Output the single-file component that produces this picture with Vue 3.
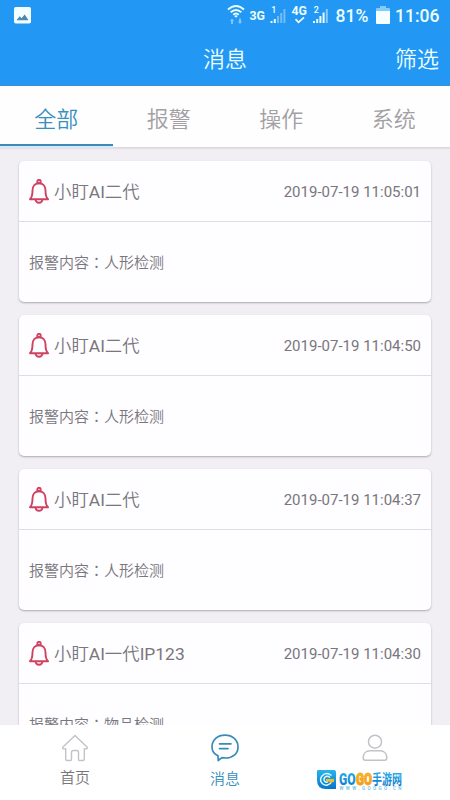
<script setup>
const tabs = ['全部', '报警', '操作', '系统']
const alerts = [
  { name: '小盯AI二代', time: '2019-07-19 11:05:01', content: '人形检测' },
  { name: '小盯AI二代', time: '2019-07-19 11:04:50', content: '人形检测' },
  { name: '小盯AI二代', time: '2019-07-19 11:04:37', content: '人形检测' },
  { name: '小盯AI一代IP123', time: '2019-07-19 11:04:30', content: '物品检测' }
]
</script>

<template>
  <div class="screen">
    <header class="top">
      <div class="status">
        <svg class="photo" width="17" height="17" viewBox="0 0 17 17">
          <rect width="17" height="16.500" rx="1.8" fill="#f4fdff" />
          <path d="M2.5 13.2 5.7 9.2 7.6 11.3 10.7 7.5 14.5 13.2Z" fill="#4b87ae" />
        </svg>
        <svg class="signals" width="106" height="28" viewBox="0 0 106 28" fill="#eaffff">
          <g fill="none" stroke="#eaffff" stroke-width="1.9">
            <path d="M1 9.5Q9 2.3 17 9.5" />
            <path d="M3.7 12.3Q9 7.5 14.3 12.3" />
            <path d="M6.3 14.7Q9 12.2 11.7 14.7" />
          </g>
          <path d="M7.2 16Q9 14.3 10.8 16L9 17.8Z" />
          <path d="M5 18.5 7.200 21H6v3H4v-3H2.800ZM13 24l2.200-2.500H14v-3h-2v3h-1.200Z" fill="#7fc5fa" />
          <text x="22.5" y="19.7" class="net" textLength="15.5" lengthAdjust="spacingAndGlyphs">3G</text>
          <text x="44.3" y="13" class="sim">1</text>
          <path d="M43.5 21h2v2h-2zM46.8 19h2v4h-2z" />
          <path d="M50 16h2v7h-2zM53.2 13h2v10h-2zM56.4 9h2v14h-2z" fill="#76bcf4" />
          <text x="64.5" y="15" class="net four" textLength="15.5" lengthAdjust="spacingAndGlyphs">4G</text>
          <path d="m68.5 19.200 3 3.2 5.5-5" fill="none" stroke="#eaffff" stroke-width="1.7" />
          <text x="86.8" y="13" class="sim">2</text>
          <path d="M86 21h2v2h-2zM89.2 19h2v4h-2zM92.4 16h2v7h-2zM95.6 12.5h2V23h-2z" />
          <path d="M98.8 9h2v14h-2z" fill="#8bcaf8" />
        </svg>
        <span class="percent">81%</span>
        <svg class="battery" width="14" height="18" viewBox="0 0 14 18">
          <path d="M4 0h6v2h3q1 0 1 1v3H0V3q0-1 1-1h3Z" fill="#83cbf8" />
          <path d="M0 5h14v12q0 1-1 1H1q-1 0-1-1Z" fill="#f6ffff" />
        </svg>
        <span class="clock">11:06</span>
      </div>
      <div class="titlebar">
        <span></span><h1>消息</h1><button>筛选</button>
      </div>
    </header>

    <nav class="tabs">
      <button v-for="(tab, i) in tabs" :key="tab" :class="{ active: i === 0 }">{{ tab }}</button>
    </nav>

    <main class="list">
      <article v-for="item in alerts" :key="item.time" class="card">
        <div class="card-head">
          <svg class="bell" width="20" height="25" viewBox="0 0 20 25" fill="none" stroke="#d0425f" stroke-width="1.900" stroke-linejoin="round">
            <circle cx="10" cy="2.5" r="1.7" />
            <path d="M1 20.3C3 18.4 3.5 16 3.5 11.5 3.5 7 6.2 4.2 10 4.2S16.500 7 16.500 11.5C16.500 16 17 18.4 19 20.300Z" />
            <path d="M6.500 20.500C7 24.900 13 24.900 13.500 20.500" />
          </svg>
          <span class="name">{{ item.name }}</span>
          <time>{{ item.time }}</time>
        </div>
        <div class="card-body"><span>报警内容<span class="colon">：</span>{{ item.content }}</span></div>
      </article>
    </main>

    <footer class="bottom">
      <div class="nav-item">
        <svg width="28" height="28" viewBox="0 0 28 28" fill="none" stroke="#c4c1c7" stroke-width="1.4" stroke-linejoin="round">
          <path d="M14 1.500 1.700 13.200Q1 15.300 4.700 14.800V25Q4.700 26.500 6.200 26.500H9.500Q10.500 26.500 10.500 25V18.500Q10.500 16.500 12.300 16.500H15.700Q17.500 16.500 17.500 18.500V25Q17.500 26.500 18.500 26.500H21.800Q23.300 26.500 23.300 25V14.800Q27 15.300 26.300 13.200Z" />
        </svg>
        <span>首页</span>
      </div>
      <div class="nav-item current">
        <svg width="28" height="28" viewBox="0 0 28 28" fill="none" stroke="#398bb9" stroke-width="1.700" stroke-linejoin="round" stroke-linecap="round">
          <path d="M7 21.800C3.300 20 1 17 1 13 1 6 6.500 1.200 14 1.200S27 6 27 13 21.500 24 14.500 24Q12.500 24 11 23.600L7.200 26.500Z" />
          <path d="M8.500 9.800H20M8.500 14.600H17" />
        </svg>
        <span>消息</span>
      </div>
      <div class="nav-item mine">
        <svg width="28" height="28" viewBox="0 0 28 28" fill="none" stroke="#c4c1c7" stroke-width="1.500" stroke-linejoin="round">
          <circle cx="14" cy="7.700" r="6.500" />
          <path d="M2.200 24C2.200 19 5.500 16.800 9 16.800H19C22.500 16.800 25.800 19 25.800 24Q25.800 26.200 23.800 26.200H4.200Q2.200 26.200 2.200 24Z" />
        </svg>
        <svg class="watermark" width="88" height="22" viewBox="0 0 88 22">
          <defs>
            <linearGradient id="blue" x1="0" y1="0" x2="0" y2="1"><stop stop-color="#28b4ed" /><stop offset="1" stop-color="#0874ca" /></linearGradient>
            <linearGradient id="gold" x1="0" y1="0" x2="0" y2="1"><stop stop-color="#ffca20" /><stop offset="1" stop-color="#f28c16" /></linearGradient>
          </defs>
          <path d="M2 1H18Q20 1 20 3V20H10Q1 20 1 11V2Q1 1 2 1Z" fill="url(#blue)" />
          <path d="M15.500 6.500Q10 2.300 5.800 7.200C2.500 12 7 17.200 11.500 16Q14.500 15.200 15.700 12.500M14 8.500Q10.500 5.800 8.200 9.200C7 12 10 14.300 12 12.500" fill="none" stroke="#dff7ff" stroke-width="1.500" />
          <path d="M10 10h8v3h-2l-1 1.500-2-2h-3Z" fill="#f2bd28" />
          <g class="brand">
            <text x="23" y="15.500" fill="url(#blue)" textLength="16.500" lengthAdjust="spacingAndGlyphs">GO</text>
            <text x="40" y="15.500" class="gold" fill="url(#gold)" textLength="16" lengthAdjust="spacingAndGlyphs">GO</text>
            <text x="56" y="14.500" class="cn" fill="url(#blue)" textLength="30" lengthAdjust="spacingAndGlyphs">手游网</text>
          </g>
          <text x="23.500" y="20.800" class="url" textLength="62">WWW.GOOGO.CN</text>
        </svg>
      </div>
    </footer>
  </div>
</template>

<style>
body { margin: 0; }
</style>

<style scoped>
.screen { width: 450px; height: 800px; overflow: hidden; display: flex; flex-direction: column; background: #f1eff3; font-family: Roboto, "Noto Sans CJK SC DemiLight", "Noto Sans CJK SC", sans-serif; font-weight: 350; color: #79767c; }
button { border: 0; background: none; padding: 0; font: inherit; color: inherit; }
.top { height: 86px; background: #2397f4; color: #edffff; flex: none; box-sizing: border-box; border-bottom: 1px solid #3d8fd2; }
.status { height: 32px; display: flex; align-items: center; font-weight: 400; }
.photo { margin: -2px 0 0 14px; }
.signals { margin: -4px 0 0 196px; }
.net { font: 700 13.500px Roboto, sans-serif; }
.four { font-size: 13px; }
.sim { font: 500 9px Roboto, sans-serif; }
.percent { width: 39px; margin-left: 2.500px; font-size: 17.500px; line-height: 32px; font-weight: 500; }
.battery { margin-left: 1.500px; margin-top: -2px; }
.clock { margin-left: 5px; font-size: 17.500px; line-height: 32px; font-weight: 500; }
.titlebar { height: 53px; display: grid; grid-template-columns: 1fr auto 1fr; align-items: center; font-size: 22px; padding-bottom: 1px; box-sizing: border-box; }
.titlebar h1 { margin: -2px 0 0; font: inherit; }
.titlebar button { justify-self: end; margin: -2px 11px 0 0; }
.tabs { height: 62px; flex: none; box-sizing: border-box; display: grid; grid-template-columns: repeat(4, 1fr); background: #fefeff; box-shadow: inset 0 -1px #dbd9dd, 0 1px 1px #e2e0e5; color: #a3a0a4; font-size: 22px; }
.tabs button { padding-top: 1px; border-bottom: 2px solid transparent; }
.tabs .active { color: #398fbe; border-color: #4187ba; box-shadow: 0 2px #d0eafa; margin-bottom: 2px; padding-top: 3px; }
.list { flex: 1; min-height: 0; overflow: hidden; display: flex; flex-direction: column; gap: 13px; padding: 13px 19px 0; }
.card { height: 141px; flex: none; background: #fefdff; border-radius: 5px; box-shadow: 0 1px 2px #aaa8ad; }
.card-head { height: 61px; box-sizing: border-box; border-bottom: 1px solid #dedde1; display: flex; align-items: center; padding: 0 10px; }
.bell { flex: none; }
.name { font-size: 17.400px; margin: -2px 0 0 5px; font-weight: 400; }
time { margin: 1px 0 0 auto; font-size: 15px; font-weight: 400; white-space: nowrap; }
.card-body { height: 79px; display: flex; align-items: center; padding: 0 10px; font-size: 15px; }
.colon { font-family: "Noto Sans CJK TC", sans-serif; }
.bottom { height: 75.500px; flex: none; display: grid; grid-template-columns: repeat(3, 1fr); background: #fff; }
.nav-item { display: flex; flex-direction: column; align-items: center; padding-top: 9px; font-size: 15px; position: relative; }
.nav-item > span { line-height: 22px; margin-top: 5px; }
.current { color: #398fbd; }
.current > span { margin-top: 6px; }
.watermark { position: absolute; left: 16px; top: 44px; }
.brand { font: 900 16px Roboto, "Noto Sans CJK SC", sans-serif; }
.gold { stroke: #f5a41c; stroke-width: 1px; }
.cn { font-size: 14px; font-weight: 700; }
.url { font: 500 4.500px Roboto, sans-serif; fill: #65bce4; }
</style>
